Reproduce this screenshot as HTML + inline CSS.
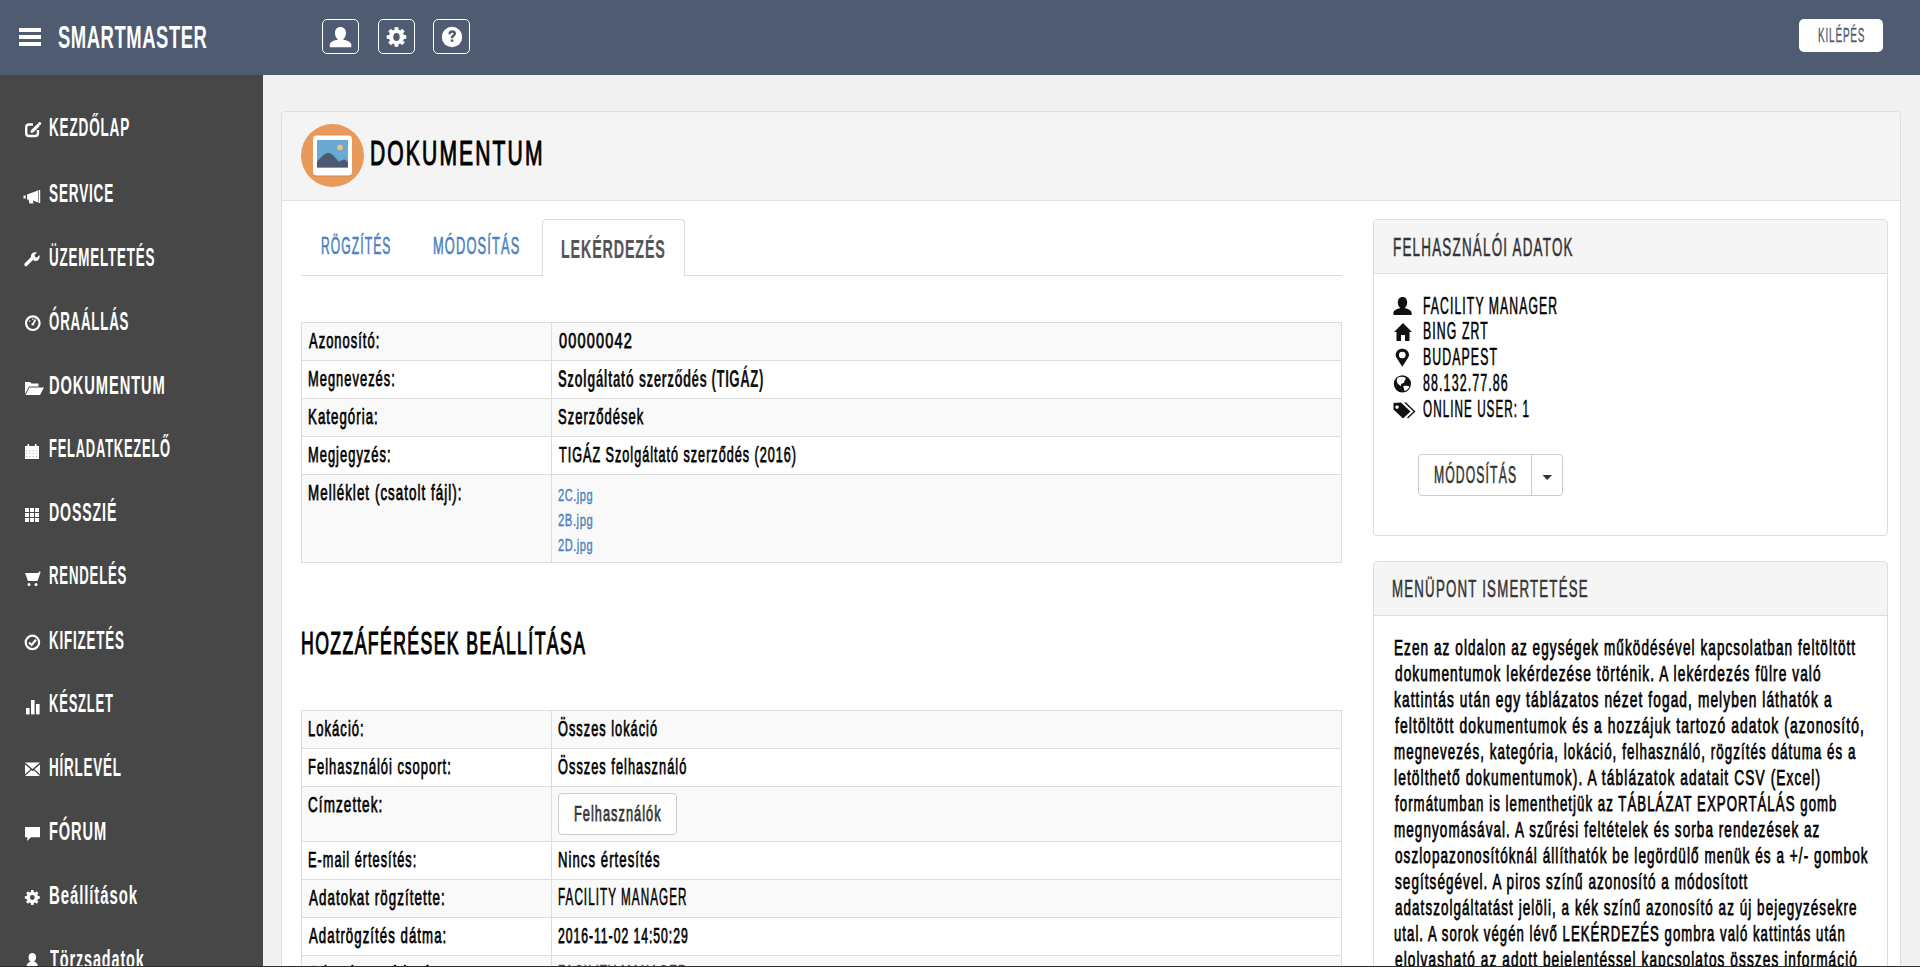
<!DOCTYPE html>
<html><head><meta charset="utf-8"><title>SmartMaster</title>
<style>
html,body{margin:0;padding:0;}
body{width:1920px;height:967px;overflow:hidden;position:relative;background:#f1f1f1;font-family:"Liberation Sans",sans-serif;}
.b{position:absolute;box-sizing:border-box;}
.t{position:absolute;white-space:pre;line-height:1;transform-origin:0 0;font-family:"Liberation Sans",sans-serif;}
svg.ov{position:absolute;left:0;top:0;width:1920px;height:967px;}
</style></head><body>
<!-- header -->
<div class="b" style="left:0;top:0;width:1920px;height:75px;background:#4e5b71"></div>
<div class="b" style="left:19px;top:28px;width:22px;height:4px;background:#fff"></div>
<div class="b" style="left:19px;top:35px;width:22px;height:4px;background:#fff"></div>
<div class="b" style="left:19px;top:42px;width:22px;height:4px;background:#fff"></div>
<div class="b" style="left:322px;top:19px;width:37px;height:35px;border:1px solid #fff;border-radius:5px"></div>
<div class="b" style="left:378px;top:19px;width:37px;height:35px;border:1px solid #fff;border-radius:5px"></div>
<div class="b" style="left:433px;top:19px;width:37px;height:35px;border:1px solid #fff;border-radius:5px"></div>
<div class="b" style="left:1799px;top:19px;width:84px;height:33px;background:#fff;border-radius:5px"></div>
<!-- sidebar -->
<div class="b" style="left:0;top:75px;width:263px;height:892px;background:#474747"></div>
<!-- outer panel -->
<div class="b" style="left:281px;top:111px;width:1620px;height:900px;background:#fff;border:1px solid #dedede;border-radius:4px"></div>
<div class="b" style="left:282px;top:112px;width:1618px;height:89px;background:#f4f4f4;border-bottom:1px solid #dedede;border-radius:3px 3px 0 0"></div>
<!-- tabs -->
<div class="b" style="left:301px;top:275px;width:1041px;height:1px;background:#dddddd"></div>
<div class="b" style="left:542px;top:219px;width:143px;height:57px;background:#fff;border:1px solid #dddddd;border-bottom:none;border-radius:4px 4px 0 0"></div>
<!-- table 1 -->
<div class="b" style="left:301px;top:322px;width:1041px;height:241px;border:1px solid #dddddd;background:#fff"></div>
<div class="b" style="left:302px;top:323px;width:1039px;height:37px;background:#f9f9f9"></div>
<div class="b" style="left:302px;top:399px;width:1039px;height:37px;background:#f9f9f9"></div>
<div class="b" style="left:302px;top:475px;width:1039px;height:87px;background:#f9f9f9"></div>
<div class="b" style="left:302px;top:360px;width:1039px;height:1px;background:#dddddd"></div>
<div class="b" style="left:302px;top:398px;width:1039px;height:1px;background:#dddddd"></div>
<div class="b" style="left:302px;top:436px;width:1039px;height:1px;background:#dddddd"></div>
<div class="b" style="left:302px;top:474px;width:1039px;height:1px;background:#dddddd"></div>
<div class="b" style="left:551px;top:323px;width:1px;height:239px;background:#dddddd"></div>
<!-- table 2 -->
<div class="b" style="left:301px;top:710px;width:1041px;height:300px;border:1px solid #dddddd;background:#fff"></div>
<div class="b" style="left:302px;top:711px;width:1039px;height:37px;background:#f9f9f9"></div>
<div class="b" style="left:302px;top:787px;width:1039px;height:54px;background:#f9f9f9"></div>
<div class="b" style="left:302px;top:880px;width:1039px;height:37px;background:#f9f9f9"></div>
<div class="b" style="left:302px;top:956px;width:1039px;height:37px;background:#f9f9f9"></div>
<div class="b" style="left:302px;top:748px;width:1039px;height:1px;background:#dddddd"></div>
<div class="b" style="left:302px;top:786px;width:1039px;height:1px;background:#dddddd"></div>
<div class="b" style="left:302px;top:841px;width:1039px;height:1px;background:#dddddd"></div>
<div class="b" style="left:302px;top:879px;width:1039px;height:1px;background:#dddddd"></div>
<div class="b" style="left:302px;top:917px;width:1039px;height:1px;background:#dddddd"></div>
<div class="b" style="left:302px;top:955px;width:1039px;height:1px;background:#dddddd"></div>
<div class="b" style="left:551px;top:711px;width:1px;height:300px;background:#dddddd"></div>
<div class="b" style="left:558px;top:793px;width:119px;height:42px;background:#fff;border:1px solid #cccccc;border-radius:4px"></div>
<!-- right panel 1 -->
<div class="b" style="left:1373px;top:219px;width:515px;height:317px;background:#fff;border:1px solid #dddddd;border-radius:4px"></div>
<div class="b" style="left:1374px;top:220px;width:513px;height:54px;background:#f5f5f5;border-bottom:1px solid #dddddd;border-radius:3px 3px 0 0"></div>
<div class="b" style="left:1418px;top:454px;width:145px;height:42px;background:#fff;border:1px solid #cccccc;border-radius:4px"></div>
<div class="b" style="left:1531px;top:455px;width:1px;height:40px;background:#cccccc"></div>
<!-- right panel 2 -->
<div class="b" style="left:1373px;top:561px;width:515px;height:500px;background:#fff;border:1px solid #dddddd;border-radius:4px"></div>
<div class="b" style="left:1374px;top:562px;width:513px;height:54px;background:#f5f5f5;border-bottom:1px solid #dddddd;border-radius:3px 3px 0 0"></div>
<svg class="ov" viewBox="0 0 1920 967">
<g fill="#fff"><path d="M340.5 27 C344 27 346 29.5 346 33 C346 36 344.5 38.5 343 39.5 C347 40.5 351 42 351.3 44.5 L351.3 47.2 L329.8 47.2 L329.8 44.5 C330 42 334 40.5 338 39.5 C336.5 38.5 335 36 335 33 C335 29.5 337 27 340.5 27 Z"/></g>
<path fill-rule="evenodd" fill="#fff" d="M406.32 35.13 L406.32 38.87 L403.82 39.03 L403.12 40.74 L404.77 42.62 L402.12 45.27 L400.24 43.62 L398.53 44.32 L398.37 46.82 L394.63 46.82 L394.47 44.32 L392.76 43.62 L390.88 45.27 L388.23 42.62 L389.88 40.74 L389.18 39.03 L386.68 38.87 L386.68 35.13 L389.18 34.97 L389.88 33.26 L388.23 31.38 L390.88 28.73 L392.76 30.38 L394.47 29.68 L394.63 27.18 L398.37 27.18 L398.53 29.68 L400.24 30.38 L402.12 28.73 L404.77 31.38 L403.12 33.26 L403.82 34.97 Z M399.70 37.00 A3.2 4.0 0 1 0 393.30 37.00 A3.2 4.0 0 1 0 399.70 37.00 Z"/>
<circle cx="452" cy="37" r="10.2" fill="#fff"/>
<path d="M449.6 34.3 C449.6 32.2 450.8 31.4 452.2 31.4 C453.7 31.4 454.8 32.3 454.8 33.6 C454.8 35.1 453.3 35.6 452.5 36.5 C452.2 36.9 452.1 37.4 452.1 38.3" fill="none" stroke="#4e5b71" stroke-width="2.5"/>
<rect x="450.8" y="39.5" width="2.6" height="2.3" fill="#4e5b71"/>
<path d="M33 124.5 L29 124.5 C27 124.5 26.2 125.5 26.2 127.5 L26.2 133 C26.2 135 27 136 29 136 L35 136 C37 136 38 135 38 133 L38 130" fill="none" stroke="#fff" stroke-width="2.4"/>
<path d="M30.5 133 L31 130.2 L37.5 123.7 L39.8 126 L33.3 132.5 Z" fill="#fff"/><circle cx="39.6" cy="123.6" r="1.6" fill="#fff"/>
<path d="M27 194.5 L38 190.5 L38 202.5 L33 200.5 L33.5 203.5 L29.5 203.5 L28.5 199.5 L27 199.5 Z" fill="#fff"/><rect x="38.6" y="190" width="1.6" height="13" fill="#fff"/><rect x="23.5" y="195.5" width="2.2" height="3" fill="#fff"/>
<path d="M26 264.5 L33 257.5" stroke="#fff" stroke-width="3.4" stroke-linecap="round"/><path d="M31 257 C30.5 253.5 33.5 251.5 37 252.5 L34.5 255 L35 257 L37 257.5 L39.5 255 C40.5 258.5 38 261.5 34.5 261 Z" fill="#fff"/>
<circle cx="32.8" cy="323.2" r="6.8" fill="none" stroke="#fff" stroke-width="2.2"/><path d="M32.8 324.5 L35.5 319.5" stroke="#fff" stroke-width="1.6"/><circle cx="32.8" cy="324.3" r="1.3" fill="#fff"/><rect x="29" y="320.5" width="1.4" height="1.2" fill="#fff"/><rect x="32.1" y="318.6" width="1.4" height="1.2" fill="#fff"/>
<path d="M25 394 L25 382 L30 382 L31.5 383.5 L38.5 383.5 L38.5 386.5 L29 386.5 Z" fill="#fff"/><path d="M25.5 395 L29.5 387.5 L44 387.5 L40 395 Z" fill="#fff"/>
<rect x="25" y="446" width="14" height="13" fill="#fff"/><rect x="27.5" y="444" width="1.6" height="3" fill="#fff"/><rect x="34.9" y="444" width="1.6" height="3" fill="#fff"/>
<rect x="26.3" y="450.5" width="0.9" height="0.8" fill="#474747" opacity="0.6"/>
<rect x="26.3" y="453.3" width="0.9" height="0.8" fill="#474747" opacity="0.6"/>
<rect x="26.3" y="456.1" width="0.9" height="0.8" fill="#474747" opacity="0.6"/>
<rect x="29.5" y="450.5" width="0.9" height="0.8" fill="#474747" opacity="0.6"/>
<rect x="29.5" y="453.3" width="0.9" height="0.8" fill="#474747" opacity="0.6"/>
<rect x="29.5" y="456.1" width="0.9" height="0.8" fill="#474747" opacity="0.6"/>
<rect x="32.7" y="450.5" width="0.9" height="0.8" fill="#474747" opacity="0.6"/>
<rect x="32.7" y="453.3" width="0.9" height="0.8" fill="#474747" opacity="0.6"/>
<rect x="32.7" y="456.1" width="0.9" height="0.8" fill="#474747" opacity="0.6"/>
<rect x="35.9" y="450.5" width="0.9" height="0.8" fill="#474747" opacity="0.6"/>
<rect x="35.9" y="453.3" width="0.9" height="0.8" fill="#474747" opacity="0.6"/>
<rect x="35.9" y="456.1" width="0.9" height="0.8" fill="#474747" opacity="0.6"/>
<rect x="25" y="508" width="4" height="4" fill="#fff"/>
<rect x="25" y="513" width="4" height="4" fill="#fff"/>
<rect x="25" y="518" width="4" height="4" fill="#fff"/>
<rect x="30" y="508" width="4" height="4" fill="#fff"/>
<rect x="30" y="513" width="4" height="4" fill="#fff"/>
<rect x="30" y="518" width="4" height="4" fill="#fff"/>
<rect x="35" y="508" width="4" height="4" fill="#fff"/>
<rect x="35" y="513" width="4" height="4" fill="#fff"/>
<rect x="35" y="518" width="4" height="4" fill="#fff"/>
<path d="M25 573 L38 573 L40 571 L40.5 572.5 L37.5 581 L28 581 Z" fill="#fff"/><circle cx="29" cy="584.5" r="1.5" fill="#fff"/><circle cx="36" cy="584.5" r="1.5" fill="#fff"/>
<circle cx="32.4" cy="642.4" r="6.7" fill="none" stroke="#fff" stroke-width="2.2"/><path d="M29 642.5 L31.6 645 L36 639.8" fill="none" stroke="#fff" stroke-width="2.2"/>
<rect x="26" y="708" width="3.6" height="6.4" fill="#fff"/><rect x="31" y="700" width="3.6" height="14.4" fill="#fff"/><rect x="36" y="704" width="3.6" height="10.4" fill="#fff"/>
<path d="M25 762.5 L40 762.5 L32.5 769 Z" fill="#fff"/><path d="M25 764.5 L30.5 769.3 L25 774.3 Z M40 764.5 L34.5 769.3 L40 774.3 Z" fill="#fff"/><path d="M25 776 L31.3 770.3 L32.5 771.3 L33.7 770.3 L40 776 Z" fill="#fff"/>
<path d="M25 827 L40 827 L40 837.3 L31 837.3 L27 841 L27.5 837.3 L25 837.3 Z" fill="#fff"/>
<path fill-rule="evenodd" fill="#fff" d="M39.79 896.19 L39.79 898.81 L37.92 898.93 L37.28 900.47 L38.52 901.87 L36.67 903.72 L35.27 902.48 L33.73 903.12 L33.61 904.99 L30.99 904.99 L30.87 903.12 L29.33 902.48 L27.93 903.72 L26.08 901.87 L27.32 900.47 L26.68 898.93 L24.81 898.81 L24.81 896.19 L26.68 896.07 L27.32 894.53 L26.08 893.13 L27.93 891.28 L29.33 892.52 L30.87 891.88 L30.99 890.01 L33.61 890.01 L33.73 891.88 L35.27 892.52 L36.67 891.28 L38.52 893.13 L37.28 894.53 L37.92 896.07 Z M34.70 897.50 A2.4 2.4 0 1 0 29.90 897.50 A2.4 2.4 0 1 0 34.70 897.50 Z"/>
<ellipse cx="32.3" cy="957.5" rx="3.8" ry="4.5" fill="#fff"/><path d="M26.5 967 C26.5 963.5 28.5 962 31 961.5 L33.6 961.5 C36 962 38 963.5 38 967 Z" fill="#fff"/>
<circle cx="332.5" cy="155.5" r="31.5" fill="#e79a5b"/>
<rect x="313" y="136.5" width="39" height="40" rx="3.5" fill="#c98550" opacity="0.8"/>
<rect x="313" y="135.5" width="39" height="40" rx="3.5" fill="#fff"/>
<rect x="317" y="140" width="31" height="27.5" fill="#6aa9d4"/>
<path d="M317 167.5 L317 162 C320 158 324 154 327 153 C330.5 152 334 156 339 162 C341.5 160 343.5 159 345.5 160 C347 161 348 162 348 163 L348 167.5 Z" fill="#4b5a71"/>
<circle cx="340" cy="147.5" r="2.8" fill="#f6c26b"/>
<path d="M1402.5 297 C1405.5 297 1407.2 299.2 1407.2 302.3 C1407.2 305 1406 307 1404.8 308 C1408.3 309 1411.5 310.5 1411.6 312.5 L1411.6 315 L1393.4 315 L1393.4 312.5 C1393.5 310.5 1396.7 309 1400.2 308 C1399 307 1397.8 305 1397.8 302.3 C1397.8 299.2 1399.5 297 1402.5 297 Z" fill="#111"/>
<path d="M1394 332 L1403 323 L1412 332 L1409.5 332 L1409.5 341 L1405 341 L1405 335 L1401 335 L1401 341 L1396.5 341 L1396.5 332 Z" fill="#111"/>
<path fill-rule="evenodd" d="M1402.3 366.7 L1397 358.5 C1395.9 356.8 1395.7 355.8 1395.7 355 C1395.7 351.4 1398.6 348.7 1402.3 348.7 C1406 348.7 1409 351.4 1409 355 C1409 355.8 1408.7 356.8 1407.6 358.5 Z M1402.3 352 A3 3 0 1 0 1402.31 352 Z" fill="#111"/><circle cx="1402.3" cy="355" r="3.3" fill="#fff"/>
<circle cx="1402.4" cy="383.8" r="8.6" fill="#111"/><path d="M1397.5 378 C1399.5 376.5 1402 376.3 1405.5 377.5 C1406 379 1405 380 1404.5 381 C1404.3 382.5 1403.5 383.5 1402 383.6 C1401 383.8 1400.8 385 1401.2 386 C1399.5 385.5 1397.8 384 1397 382 C1396.6 380.5 1396.8 379 1397.5 378 Z M1403.2 386.2 C1405 385.8 1407.5 385.6 1409.5 386.4 C1408.8 388.5 1406.5 390.5 1404.2 391 C1404.5 389.5 1403.8 387.8 1403.2 386.2 Z" fill="#fff"/>
<path fill-rule="evenodd" d="M1393.5 403 L1401 402.5 L1410.5 411.5 L1403 418.5 L1393.5 409.5 Z M1397 405.5 A1.6 1.6 0 1 0 1397.01 405.5 Z" fill="#111"/><circle cx="1397" cy="407" r="1.5" fill="#fff"/><path d="M1404 402.5 L1406 402.5 L1415.5 411.5 L1408 418.5 L1407 417.5 L1413.5 411.5 Z" fill="#111"/>
<path d="M1542.5 475 L1552 475 L1547.25 480 Z" fill="#333"/>
</svg>
<div class="t" style="left:58.42px;top:21px;font-size:32px;font-weight:700;color:#ffffff;letter-spacing:0.03em;transform:scaleX(0.5759);">SMARTMASTER</div>
<div class="t" style="left:1817.50px;top:25px;font-size:20px;font-weight:400;color:#4f5b6f;letter-spacing:0.08em;transform:scaleX(0.5000);-webkit-text-stroke:0.35px #4f5b6f;">KILÉPÉS</div>
<div class="t" style="left:48.92px;top:115px;font-size:25px;font-weight:700;color:#ffffff;letter-spacing:0.06em;transform:scaleX(0.5421);">KEZDŐLAP</div>
<div class="t" style="left:49.46px;top:181px;font-size:25px;font-weight:700;color:#ffffff;letter-spacing:0.06em;transform:scaleX(0.5436);">SERVICE</div>
<div class="t" style="left:49.46px;top:245px;font-size:25px;font-weight:700;color:#ffffff;letter-spacing:0.06em;transform:scaleX(0.5369);">ÜZEMELTETÉS</div>
<div class="t" style="left:49.47px;top:309px;font-size:25px;font-weight:700;color:#ffffff;letter-spacing:0.06em;transform:scaleX(0.5318);">ÓRAÁLLÁS</div>
<div class="t" style="left:48.82px;top:373px;font-size:25px;font-weight:700;color:#ffffff;letter-spacing:0.06em;transform:scaleX(0.5886);">DOKUMENTUM</div>
<div class="t" style="left:48.97px;top:436px;font-size:25px;font-weight:700;color:#ffffff;letter-spacing:0.06em;transform:scaleX(0.5173);">FELADATKEZELŐ</div>
<div class="t" style="left:48.87px;top:500px;font-size:25px;font-weight:700;color:#ffffff;letter-spacing:0.06em;transform:scaleX(0.5672);">DOSSZIÉ</div>
<div class="t" style="left:48.94px;top:563px;font-size:25px;font-weight:700;color:#ffffff;letter-spacing:0.06em;transform:scaleX(0.5278);">RENDELÉS</div>
<div class="t" style="left:48.93px;top:628px;font-size:25px;font-weight:700;color:#ffffff;letter-spacing:0.06em;transform:scaleX(0.5365);">KIFIZETÉS</div>
<div class="t" style="left:48.96px;top:691px;font-size:25px;font-weight:700;color:#ffffff;letter-spacing:0.06em;transform:scaleX(0.5207);">KÉSZLET</div>
<div class="t" style="left:48.93px;top:755px;font-size:25px;font-weight:700;color:#ffffff;letter-spacing:0.06em;transform:scaleX(0.5374);">HÍRLEVÉL</div>
<div class="t" style="left:48.83px;top:819px;font-size:25px;font-weight:700;color:#ffffff;letter-spacing:0.06em;transform:scaleX(0.5851);">FÓRUM</div>
<div class="t" style="left:48.80px;top:883px;font-size:25px;font-weight:700;color:#ffffff;letter-spacing:0.06em;transform:scaleX(0.5986);">Beállítások</div>
<div class="t" style="left:50.00px;top:947px;font-size:25px;font-weight:700;color:#ffffff;letter-spacing:0.06em;transform:scaleX(0.5784);">Törzsadatok</div>
<div class="t" style="left:369.79px;top:135px;font-size:35px;font-weight:400;color:#000;letter-spacing:0.1em;transform:scaleX(0.6028);-webkit-text-stroke:1.1px #000;">DOKUMENTUM</div>
<div class="t" style="left:321.07px;top:235px;font-size:23px;font-weight:400;color:#4a80bd;letter-spacing:0.09em;transform:scaleX(0.5252);-webkit-text-stroke:0.6px #4a80bd;">RÖGZÍTÉS</div>
<div class="t" style="left:432.94px;top:235px;font-size:23px;font-weight:400;color:#4a80bd;letter-spacing:0.09em;transform:scaleX(0.5588);-webkit-text-stroke:0.6px #4a80bd;">MÓDOSÍTÁS</div>
<div class="t" style="left:561.43px;top:237px;font-size:25px;font-weight:700;color:#555555;letter-spacing:0.06em;transform:scaleX(0.5722);-webkit-text-stroke:0.2px #555555;">LEKÉRDEZÉS</div>
<div class="t" style="left:309.00px;top:330px;font-size:22px;font-weight:400;color:#000;letter-spacing:0.08em;transform:scaleX(0.5866);-webkit-text-stroke:0.75px #000;">Azonosító:</div>
<div class="t" style="left:308.42px;top:368px;font-size:22px;font-weight:400;color:#000;letter-spacing:0.08em;transform:scaleX(0.5849);-webkit-text-stroke:0.75px #000;">Megnevezés:</div>
<div class="t" style="left:308.40px;top:406px;font-size:22px;font-weight:400;color:#000;letter-spacing:0.08em;transform:scaleX(0.6009);-webkit-text-stroke:0.75px #000;">Kategória:</div>
<div class="t" style="left:308.42px;top:444px;font-size:22px;font-weight:400;color:#000;letter-spacing:0.08em;transform:scaleX(0.5849);-webkit-text-stroke:0.75px #000;">Megjegyzés:</div>
<div class="t" style="left:308.39px;top:482px;font-size:22px;font-weight:400;color:#000;letter-spacing:0.08em;transform:scaleX(0.6052);-webkit-text-stroke:0.75px #000;">Melléklet (csatolt fájl):</div>
<div class="t" style="left:559.00px;top:330px;font-size:22px;font-weight:400;color:#000;letter-spacing:0.08em;transform:scaleX(0.6600);-webkit-text-stroke:0.75px #000;">00000042</div>
<div class="t" style="left:558.42px;top:368px;font-size:23px;font-weight:700;color:#111;letter-spacing:0.04em;transform:scaleX(0.5755);-webkit-text-stroke:0.1px #111;">Szolgáltató szerződés (TIGÁZ)</div>
<div class="t" style="left:558.41px;top:406px;font-size:22px;font-weight:400;color:#000;letter-spacing:0.08em;transform:scaleX(0.5882);-webkit-text-stroke:0.75px #000;">Szerződések</div>
<div class="t" style="left:559.00px;top:444px;font-size:22px;font-weight:400;color:#000;letter-spacing:0.08em;transform:scaleX(0.5724);-webkit-text-stroke:0.75px #000;">TIGÁZ Szolgáltató szerződés (2016)</div>
<div class="t" style="left:557.75px;top:487px;font-size:17px;font-weight:400;color:#4a80bd;letter-spacing:0.05em;transform:scaleX(0.6500);-webkit-text-stroke:0.35px #4a80bd;">2C.jpg</div>
<div class="t" style="left:557.74px;top:512px;font-size:17px;font-weight:400;color:#4a80bd;letter-spacing:0.05em;transform:scaleX(0.6627);-webkit-text-stroke:0.35px #4a80bd;">2B.jpg</div>
<div class="t" style="left:557.75px;top:537px;font-size:17px;font-weight:400;color:#4a80bd;letter-spacing:0.05em;transform:scaleX(0.6500);-webkit-text-stroke:0.35px #4a80bd;">2D.jpg</div>
<div class="t" style="left:300.90px;top:627px;font-size:32px;font-weight:400;color:#000;letter-spacing:0.08em;transform:scaleX(0.5512);-webkit-text-stroke:1.2px #000;">HOZZÁFÉRÉSEK BEÁLLÍTÁSA</div>
<div class="t" style="left:308.41px;top:718px;font-size:22px;font-weight:400;color:#000;letter-spacing:0.08em;transform:scaleX(0.5913);-webkit-text-stroke:0.75px #000;">Lokáció:</div>
<div class="t" style="left:308.41px;top:756px;font-size:22px;font-weight:400;color:#000;letter-spacing:0.08em;transform:scaleX(0.5876);-webkit-text-stroke:0.75px #000;">Felhasználói csoport:</div>
<div class="t" style="left:308.39px;top:794px;font-size:22px;font-weight:400;color:#000;letter-spacing:0.08em;transform:scaleX(0.6134);-webkit-text-stroke:0.75px #000;">Címzettek:</div>
<div class="t" style="left:308.42px;top:849px;font-size:22px;font-weight:400;color:#000;letter-spacing:0.08em;transform:scaleX(0.5784);-webkit-text-stroke:0.75px #000;">E-mail értesítés:</div>
<div class="t" style="left:309.00px;top:887px;font-size:22px;font-weight:400;color:#000;letter-spacing:0.08em;transform:scaleX(0.6054);-webkit-text-stroke:0.75px #000;">Adatokat rögzítette:</div>
<div class="t" style="left:309.00px;top:925px;font-size:22px;font-weight:400;color:#000;letter-spacing:0.08em;transform:scaleX(0.6004);-webkit-text-stroke:0.75px #000;">Adatrögzítés dátma:</div>
<div class="t" style="left:309.00px;top:963px;font-size:22px;font-weight:400;color:#000;letter-spacing:0.08em;transform:scaleX(0.6290);-webkit-text-stroke:0.75px #000;">Adatokat módosította:</div>
<div class="t" style="left:558.42px;top:718px;font-size:22px;font-weight:400;color:#000;letter-spacing:0.08em;transform:scaleX(0.5799);-webkit-text-stroke:0.75px #000;">Összes lokáció</div>
<div class="t" style="left:558.42px;top:756px;font-size:22px;font-weight:400;color:#000;letter-spacing:0.08em;transform:scaleX(0.5813);-webkit-text-stroke:0.75px #000;">Összes felhasználó</div>
<div class="t" style="left:574.22px;top:803px;font-size:22px;font-weight:400;color:#333;letter-spacing:0.08em;transform:scaleX(0.5811);-webkit-text-stroke:0.75px #333;">Felhasználók</div>
<div class="t" style="left:558.40px;top:849px;font-size:22px;font-weight:400;color:#000;letter-spacing:0.08em;transform:scaleX(0.5970);-webkit-text-stroke:0.75px #000;">Nincs értesítés</div>
<div class="t" style="left:558.49px;top:886px;font-size:23px;font-weight:400;color:#000;letter-spacing:0.09em;transform:scaleX(0.5076);-webkit-text-stroke:0.55px #000;">FACILITY MANAGER</div>
<div class="t" style="left:558.45px;top:925px;font-size:22px;font-weight:400;color:#000;letter-spacing:0.08em;transform:scaleX(0.5536);-webkit-text-stroke:0.75px #000;">2016-11-02 14:50:29</div>
<div class="t" style="left:558.49px;top:963px;font-size:23px;font-weight:400;color:#b81c1c;letter-spacing:0.09em;transform:scaleX(0.5076);-webkit-text-stroke:0.55px #b81c1c;">FACILITY MANAGER</div>
<div class="t" style="left:1392.93px;top:235px;font-size:25px;font-weight:400;color:#333;letter-spacing:0.09em;transform:scaleX(0.5373);-webkit-text-stroke:0.55px #333;">FELHASZNÁLÓI ADATOK</div>
<div class="t" style="left:1423.47px;top:295px;font-size:23px;font-weight:400;color:#000;letter-spacing:0.09em;transform:scaleX(0.5299);-webkit-text-stroke:0.55px #000;">FACILITY MANAGER</div>
<div class="t" style="left:1423.47px;top:320px;font-size:23px;font-weight:400;color:#000;letter-spacing:0.09em;transform:scaleX(0.5333);-webkit-text-stroke:0.55px #000;">BING ZRT</div>
<div class="t" style="left:1423.47px;top:346px;font-size:23px;font-weight:400;color:#000;letter-spacing:0.09em;transform:scaleX(0.5341);-webkit-text-stroke:0.55px #000;">BUDAPEST</div>
<div class="t" style="left:1423.46px;top:372px;font-size:23px;font-weight:400;color:#000;letter-spacing:0.09em;transform:scaleX(0.5397);-webkit-text-stroke:0.55px #000;">88.132.77.86</div>
<div class="t" style="left:1423.49px;top:398px;font-size:23px;font-weight:400;color:#000;letter-spacing:0.09em;transform:scaleX(0.5082);-webkit-text-stroke:0.55px #000;">ONLINE USER: 1</div>
<div class="t" style="left:1434.38px;top:463px;font-size:24px;font-weight:400;color:#333;letter-spacing:0.09em;transform:scaleX(0.5085);-webkit-text-stroke:0.55px #333;">MÓDOSÍTÁS</div>
<div class="t" style="left:1392.49px;top:577px;font-size:24px;font-weight:400;color:#333;letter-spacing:0.09em;transform:scaleX(0.5533);-webkit-text-stroke:0.55px #333;">MENÜPONT ISMERTETÉSE</div>
<div class="t" style="left:1393.89px;top:637px;font-size:22px;font-weight:400;color:#000;letter-spacing:0.08em;transform:scaleX(0.6148);-webkit-text-stroke:0.75px #000;">Ezen az oldalon az egységek működésével kapcsolatban feltöltött</div>
<div class="t" style="left:1394.50px;top:663px;font-size:22px;font-weight:400;color:#000;letter-spacing:0.08em;transform:scaleX(0.6203);-webkit-text-stroke:0.75px #000;">dokumentumok lekérdezése történik. A lekérdezés fülre való</div>
<div class="t" style="left:1393.88px;top:689px;font-size:22px;font-weight:400;color:#000;letter-spacing:0.08em;transform:scaleX(0.6229);-webkit-text-stroke:0.75px #000;">kattintás után egy táblázatos nézet fogad, melyben láthatók a</div>
<div class="t" style="left:1394.50px;top:715px;font-size:22px;font-weight:400;color:#000;letter-spacing:0.08em;transform:scaleX(0.6288);-webkit-text-stroke:0.75px #000;">feltöltött dokumentumok és a hozzájuk tartozó adatok (azonosító,</div>
<div class="t" style="left:1393.89px;top:741px;font-size:22px;font-weight:400;color:#000;letter-spacing:0.08em;transform:scaleX(0.6056);-webkit-text-stroke:0.75px #000;">megnevezés, kategória, lokáció, felhasználó, rögzítés dátuma és a</div>
<div class="t" style="left:1393.88px;top:767px;font-size:22px;font-weight:400;color:#000;letter-spacing:0.08em;transform:scaleX(0.6242);-webkit-text-stroke:0.75px #000;">letölthető dokumentumok). A táblázatok adatait CSV (Excel)</div>
<div class="t" style="left:1394.50px;top:793px;font-size:22px;font-weight:400;color:#000;letter-spacing:0.08em;transform:scaleX(0.6003);-webkit-text-stroke:0.75px #000;">formátumban is lementhetjük az TÁBLÁZAT EXPORTÁLÁS gomb</div>
<div class="t" style="left:1393.89px;top:819px;font-size:22px;font-weight:400;color:#000;letter-spacing:0.08em;transform:scaleX(0.6123);-webkit-text-stroke:0.75px #000;">megnyomásával. A szűrési feltételek és sorba rendezések az</div>
<div class="t" style="left:1394.50px;top:845px;font-size:22px;font-weight:400;color:#000;letter-spacing:0.08em;transform:scaleX(0.6136);-webkit-text-stroke:0.75px #000;">oszlopazonosítóknál állíthatók be legördülő menük és a +/- gombok</div>
<div class="t" style="left:1394.50px;top:871px;font-size:22px;font-weight:400;color:#000;letter-spacing:0.08em;transform:scaleX(0.6123);-webkit-text-stroke:0.75px #000;">segítségével. A piros színű azonosító a módosított</div>
<div class="t" style="left:1394.50px;top:897px;font-size:22px;font-weight:400;color:#000;letter-spacing:0.08em;transform:scaleX(0.6096);-webkit-text-stroke:0.75px #000;">adatszolgáltatást jelöli, a kék színű azonosító az új bejegyzésekre</div>
<div class="t" style="left:1393.90px;top:923px;font-size:22px;font-weight:400;color:#000;letter-spacing:0.08em;transform:scaleX(0.5966);-webkit-text-stroke:0.75px #000;">utal. A sorok végén lévő LEKÉRDEZÉS gombra való kattintás után</div>
<div class="t" style="left:1394.50px;top:949px;font-size:22px;font-weight:400;color:#000;letter-spacing:0.08em;transform:scaleX(0.6195);-webkit-text-stroke:0.75px #000;">elolvasható az adott bejelentéssel kapcsolatos összes információ</div>
<div class="b" style="left:0;top:966px;width:1920px;height:1px;background:#2e2e2e"></div>
</body></html>
